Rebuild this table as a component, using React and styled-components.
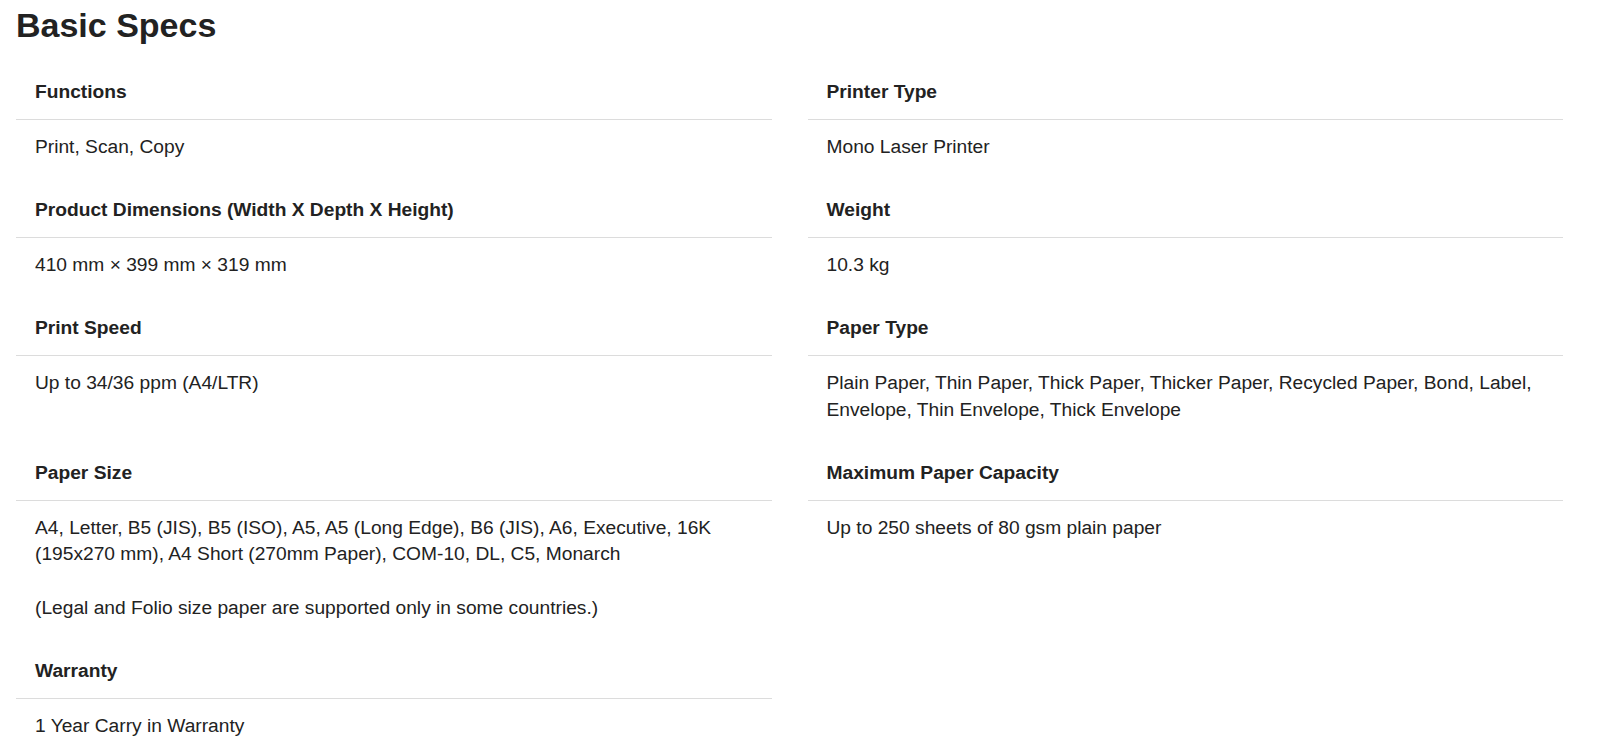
import React from "react";
import styled, { createGlobalStyle } from "styled-components";

const GlobalStyle = createGlobalStyle`
  html, body {
    margin: 0;
    padding: 0;
    background: #ffffff;
  }
  body {
    font-family: "Liberation Sans", Arial, sans-serif;
    color: #222222;
  }
`;

const Page = styled.main`
  padding: 5px 37px 20px 16px;
`;

const Title = styled.h2`
  margin: 0 0 17px;
  font-size: 34px;
  line-height: 40px;
  font-weight: 700;
  color: #222222;
`;

const SpecGrid = styled.dl`
  margin: 0;
  display: grid;
  grid-template-columns: 1fr 1fr;
  column-gap: 36px;
`;

const SpecItem = styled.div`
  display: flex;
  flex-direction: column;
`;

const Label = styled.dt`
  margin: 0;
  padding: 16.9px 18px 13.2px 19px;
  font-size: 19.2px;
  line-height: 1.4;
  font-weight: 700;
  border-bottom: 1px solid #dcdcdc;
`;

const Value = styled.dd`
  margin: 0;
  padding: 14px 18px 19.1px 19px;
  font-size: 19.2px;
  line-height: 1.4;
  font-weight: 400;
`;

const specs = [
  { label: "Functions", value: ["Print, Scan, Copy"] },
  { label: "Printer Type", value: ["Mono Laser Printer"] },
  { label: "Product Dimensions (Width X Depth X Height)", value: ["410 mm × 399 mm × 319 mm"] },
  { label: "Weight", value: ["10.3 kg"] },
  { label: "Print Speed", value: ["Up to 34/36 ppm (A4/LTR)"] },
  {
    label: "Paper Type",
    value: [
      "Plain Paper, Thin Paper, Thick Paper, Thicker Paper, Recycled Paper, Bond, Label, Envelope, Thin Envelope, Thick Envelope",
    ],
  },
  {
    label: "Paper Size",
    value: [
      "A4, Letter, B5 (JIS), B5 (ISO), A5, A5 (Long Edge), B6 (JIS), A6, Executive, 16K (195x270 mm), A4 Short (270mm Paper), COM-10, DL, C5, Monarch",
      "",
      "(Legal and Folio size paper are supported only in some countries.)",
    ],
  },
  { label: "Maximum Paper Capacity", value: ["Up to 250 sheets of 80 gsm plain paper"] },
  { label: "Warranty", value: ["1 Year Carry in Warranty"] },
];

export default function App() {
  return (
    <>
      <GlobalStyle />
      <Page>
        <Title>Basic Specs</Title>
        <SpecGrid>
          {specs.map((s) => (
            <SpecItem key={s.label}>
              <Label>{s.label}</Label>
              <Value>
                {s.value.map((line, i) => (
                  <React.Fragment key={i}>
                    {i > 0 && <br />}
                    {line}
                  </React.Fragment>
                ))}
              </Value>
            </SpecItem>
          ))}
        </SpecGrid>
      </Page>
    </>
  );
}
